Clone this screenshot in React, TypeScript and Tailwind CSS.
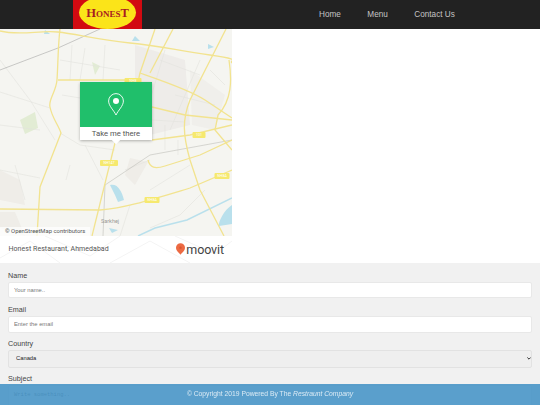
const majorRoads = [
  "M0 31 C20 36 40 30 58 32 S100 40 130 43 S175 50 210 55 S228 60 232 63",
  "M60 29 C58 45 58 65 57 80 C56 92 48 100 50 107 C52 118 58 124 61 133 L40 187 L37 236",
  "M0 209 L100 210 C125 208 150 200 190 188 L232 170",
  "M115 143 L92 236",
  "M148 160 C150 168 155 169 165 166 L200 155 L232 140",
  "M155 29 L140 73 L134 100",
  "M173 29 L150 73",
  "M140 73 C160 80 190 90 205 100 L232 118",
  "M226 29 L190 100 C182 120 183 135 190 160 L200 190 L224 236",
  "M58 80 L140 80",
  "M152 107 L185 115 L232 120",
  "M152 140 L190 135 L232 125",
  "M229 60 C232 80 232 100 218 115 L215 130 L232 150",
];
const minorRoads = [
  "M0 60 L30 100 L55 140 M0 92 L50 108 M0 170 L40 178 M60 60 L120 70 M72 45 L70 80",
  "M85 48 L80 80 M105 45 L103 80 M60 133 L80 145 L115 150 M70 165 L66 180 M15 165 L25 200",
  "M165 50 L150 100 M200 60 L170 130 M152 120 L185 122 M40 130 L0 125 M125 170 L150 160",
  "M150 190 L190 165 M130 205 L120 236 M205 190 L180 215 L150 228 M85 145 L103 180",
  "M160 60 L200 75 M175 95 L215 105 M165 125 L165 150 M178 140 L178 155 M210 70 L225 85 M62 95 L80 98",
];
const labels = [
  { x: 133, y: 81, w: 17, t: "NH8" },
  { x: 199, y: 135, w: 13, t: "101" },
  { x: 109, y: 163, w: 18, t: "NH147" },
  { x: 152, y: 200, w: 15, t: "NH8A" },
  { x: 222, y: 176, w: 15, t: "NH8A" },
];

const MapDrawing = () => (
  <svg viewBox="0 29 232 207" className="w-full h-full block">
    <rect x="0" y="29" width="232" height="207" fill="#f5f5f1" />
    <path d="M135 45 L185 60 L190 125 L150 135 L135 100 Z" fill="#eeece9" />
    <path d="M190 70 L225 95 L215 130 L192 125 Z" fill="#f0efeb" />
    <path d="M0 170 L20 180 L25 205 L0 200 Z M0 212 L15 212 L25 236 L0 228 Z M130 158 L148 162 L135 185 L125 175 Z" fill="#efede8" />
    <path d="M92 95 L100 92 L105 110 L95 112 Z M20 120 L35 112 L38 128 L25 134 Z M92 62 L100 66 L95 75 Z" fill="#e2ecd4" />
    <path d="M110 185 C118 183 122 192 124 200 L118 202 L115 195 Z M232 205 C224 210 218 222 219 226 L232 224 Z M109 228 L118 230 L112 233 Z M45 30 L50 34 L44 34 Z M135 36 L140 41 L132 41 Z M208 44 L214 47 L208 49 Z" fill="#b9e0ec" />
    <path d="M232 198 L187 220 L155 228 L138 236" fill="none" stroke="#b9e0ec" strokeWidth="1.4" />
    <g fill="none" stroke="#e2e2de" strokeWidth="0.6">
      {minorRoads.map((d) => (
        <path key={d} d={d} />
      ))}
    </g>
    <path d="M100 29 L58 48 L0 70" fill="none" stroke="#999" strokeWidth="0.5" />
    <path d="M232 140 L150 155 L105 185 L103 236" fill="none" stroke="#b5b5ae" strokeWidth="0.5" />
    <g fill="none" stroke="#f2e38f" strokeWidth="1.3">
      {majorRoads.map((d) => (
        <path key={d} d={d} />
      ))}
    </g>
    {labels.map((l) => (
      <g key={l.x}>
        <rect x={l.x - l.w / 2} y={l.y - 3} width={l.w} height="6" rx="1" fill="#f6e96e" />
        <text x={l.x} y={l.y + 1.4} textAnchor="middle" fontSize="3.6" fill="#fff" fontFamily="Roboto, sans-serif">
          {l.t}
        </text>
      </g>
    ))}
    <text x="101" y="223" fontSize="5.5" fill="#9a9a96" fontFamily="Roboto, sans-serif">Sarkhej</text>
  </svg>
);

const FormLabel = ({ children }: { children: string }) => (
  <label className="block text-[7.2px] leading-[11px] text-[#444] mb-[1px]">{children}</label>
);

const inputClass =
  "block w-full h-[16.5px] bg-white border border-[#e8e8e8] rounded-[2px] px-[5px] text-[5.8px] outline-none placeholder:text-[#777]";

const App = () => {
  return (
    <div className="h-screen overflow-hidden bg-white font-['Liberation_Sans',sans-serif]">
      <header className="h-[29px] bg-[#222222] flex pl-[73px]">
        <div className="w-[69px] h-[29px] bg-[#d20a11] flex items-center justify-center overflow-hidden">
          <div className="w-[57px] h-[33px] shrink-0 -mt-[4px] rounded-[50%] bg-[#fbe419] flex items-center justify-center pt-[1px]">
            <span className="font-['Liberation_Serif',serif] font-bold text-[12.5px] text-[#a81c22] [font-variant:small-caps]">
              HonesT
            </span>
          </div>
        </div>
        <nav className="flex items-center pt-[1px] text-[#c4c4c4] text-[8.2px] ml-[177px] gap-[26.5px]">
          <a>Home</a>
          <a>Menu</a>
          <a>Contact Us</a>
        </nav>
      </header>

      <div className="relative w-[232px] h-[207px]">
        <MapDrawing />
        <div className="absolute left-[80px] top-[53px] w-[72px] shadow-[0_1px_3px_rgba(0,0,0,0.3)] rounded-[1px]">
          <div className="h-[45px] bg-[#20bf6b] flex items-center justify-center">
            <svg viewBox="0 0 16 23" className="w-[16px] h-[23px]" fill="none">
              <path
                d="M8 22 C6 17.5 .6 13 .6 8 A7.4 7.4 0 0 1 15.4 8 C15.4 13 10 17.5 8 22 Z"
                stroke="#fff"
                strokeWidth="0.9"
              />
              <circle cx="8" cy="8" r="3" fill="#fff" />
            </svg>
          </div>
          <div className="relative h-[13px] bg-white text-center text-[7.7px] leading-[13px] text-[#555] font-['Roboto',sans-serif]">
            Take me there
            <div className="absolute left-[33px] -bottom-[3px] w-[6px] h-[6px] rotate-45 bg-white"></div>
          </div>
        </div>
        <div className="absolute left-0 bottom-0 w-[90px] h-[9px] pl-[5px] bg-white/70 text-[5.9px] leading-[9px] text-[#555] font-['Roboto',sans-serif] whitespace-nowrap">
          © OpenStreetMap contributors
        </div>
      </div>

      <div className="relative w-[232px] h-[27px] flex items-center justify-between pl-[8.5px] pr-[8px] font-['Roboto',sans-serif]">
        <svg viewBox="0 0 232 27" className="absolute inset-0 w-full h-full" fill="none" stroke="#f4f4f4" strokeWidth="1">
          <path d="M0 22 L30 5 L60 27 M45 0 L90 20 L120 0 M110 27 L150 5 L190 27 M175 0 L215 18 L232 5" />
        </svg>
        <span className="relative text-[7px] text-[#555] tracking-[0.05px]">Honest Restaurant, Ahmedabad</span>
        <div className="relative flex items-center">
          <svg viewBox="0 0 10 13" className="w-[9px] h-[12px] mr-[1px] -mt-[2px]">
            <path d="M5 13 C3.5 10.5 0 8.5 0 5 A5 5 0 0 1 10 5 C10 8.5 6.5 10.5 5 13 Z" fill="#ec6a43" />
            <circle cx="5" cy="5" r="1.3" fill="#d9542f" />
          </svg>
          <span className="text-[12.5px] leading-[14px] text-[#444] tracking-[-0.1px]">moovit</span>
        </div>
      </div>

      <form className="bg-[#f1f1f1] h-[200px] px-[8px] pt-[6.5px]">
        <FormLabel>Name</FormLabel>
        <input className={inputClass} placeholder="Your name.." />
        <div className="h-[6px]"></div>
        <FormLabel>Email</FormLabel>
        <input className={inputClass} placeholder="Enter the email" />
        <div className="h-[5px]"></div>
        <FormLabel>Country</FormLabel>
        <div className="relative">
          <select className="block w-full h-[18px] appearance-none bg-[#efefef] border border-[#e2e2e2] rounded-[2px] pl-[7px] text-[5.8px] text-[#222]">
            <option>Canada</option>
          </select>
          <svg viewBox="0 0 6 4" className="absolute right-[1.5px] top-[7px] w-[4px] h-[3px]" fill="none" stroke="#222" strokeWidth="1.4">
            <path d="M.5 .5 L3 3 L5.5 .5" />
          </svg>
        </div>
        <div className="h-[5px]"></div>
        <FormLabel>Subject</FormLabel>
        <textarea
          className="block w-full h-[60px] bg-white border border-[#e8e8e8] rounded-[2px] px-[5px] py-[5px] text-[5.5px] font-['Liberation_Mono',monospace] outline-none placeholder:text-[#555] resize-none"
          placeholder="Write something.."
        ></textarea>
      </form>

      <footer className="fixed left-0 right-0 bottom-0 h-[21px] bg-[#4895c6]/90 flex items-center justify-center text-[6.75px] text-[#dcebf5]">
        <span>
          © Copyright 2019 Powered By The <em>Restraunt Company</em>
        </span>
      </footer>
    </div>
  );
};

export default App;
